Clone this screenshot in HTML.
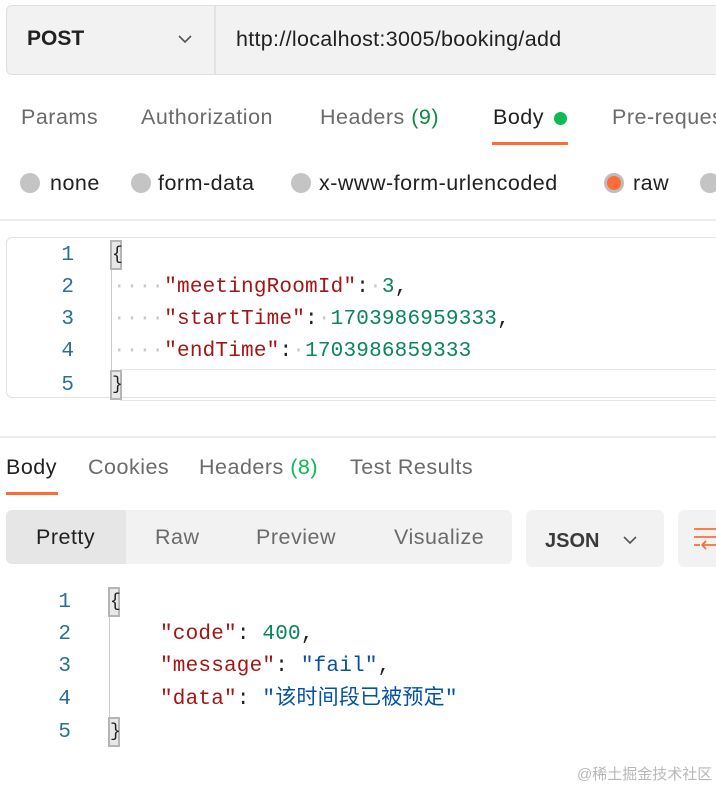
<!DOCTYPE html>
<html><head><meta charset="utf-8"><style>
*{margin:0;padding:0;box-sizing:border-box}
html{overflow:hidden;width:716px;height:788px}
body{width:716px;height:788px;background:#fff;position:relative;overflow:hidden;font-family:"Liberation Sans","Noto Sans CJK SC",sans-serif;color:#212121}
.a{position:absolute;white-space:nowrap}
.ui{font-size:21.5px;letter-spacing:0.5px;color:#6b6b6b}
.mono{font-family:"Liberation Mono","Noto Sans CJK SC",monospace;font-size:21px;letter-spacing:0.2px;line-height:26px;height:26px}
.ln{color:#2a6f97;font-family:"Liberation Mono",monospace;font-size:21px;width:30px;text-align:right}
.k{color:#a31515}.n{color:#098658}.s{color:#0451a5}.d{color:#ccc}
.rad{position:absolute;width:20px;height:20px;border-radius:50%;background:#c4c4c4}
.br{position:absolute;width:12px;height:30px;background:#e8e8e8;border:2px solid #b5b5b5;font-family:"Liberation Mono",monospace;font-size:18px;line-height:26px;text-align:center;color:#222}
</style></head><body>
<div class="a" style="left:6px;top:5px;width:710px;height:70px;background:#f2f2f2;border:1.5px solid #e0e0e0;border-right:none;border-radius:6px 0 0 6px"></div>
<div class="a" style="left:214px;top:6px;width:2px;height:68px;background:#e2e2e2"></div>
<div class="a" style="left:27px;top:27px;font-size:21px;font-weight:bold;color:#212121">POST</div>
<svg class="a" style="left:177px;top:34px" width="16" height="10"><path d="M2 2 L8 8 L14 2" fill="none" stroke="#555" stroke-width="1.6"/></svg>
<div class="a" style="left:236px;top:27px;font-size:21.5px;letter-spacing:0.3px;color:#212121">http://localhost:3005/booking/add</div>
<div class="a ui" style="left:21px;top:105px">Params</div>
<div class="a ui" style="left:141px;top:105px">Authorization</div>
<div class="a ui" style="left:320px;top:105px">Headers <span style="color:#0f8a3e">(9)</span></div>
<div class="a ui" style="left:493px;top:105px;color:#212121">Body</div>
<div class="a" style="left:554px;top:112px;width:13px;height:13px;border-radius:50%;background:#0cbb52"></div>
<div class="a" style="left:492px;top:142px;width:76px;height:3px;background:#ff6c37"></div>
<div class="a ui" style="left:612px;top:105px">Pre-request Script</div>
<div class="rad" style="left:20px;top:173px"></div><div class="a ui" style="left:50px;top:171px;color:#212121">none</div>
<div class="rad" style="left:131px;top:173px"></div><div class="a ui" style="left:158px;top:171px;color:#212121">form-data</div>
<div class="rad" style="left:291px;top:173px"></div><div class="a ui" style="left:319px;top:171px;color:#212121">x-www-form-urlencoded</div>
<div class="rad" style="left:604px;top:173px;background:#ff6c37;border:3px solid #bdbdbd"></div><div class="a ui" style="left:633px;top:171px;color:#212121">raw</div>
<div class="rad" style="left:700px;top:173px"></div>
<div class="a" style="left:0;top:219px;width:716px;height:2px;background:#ededed"></div>
<div class="a" style="left:6px;top:237px;width:710px;height:161px;border:1.5px solid #e3e3e3;border-right:none;border-radius:6px 0 0 6px"></div>
<div class="a" style="left:120px;top:369px;width:596px;height:32px;border-top:1.5px solid #e8e8e8;border-bottom:1.5px solid #e8e8e8"></div>
<div class="a ln" style="left:44px;top:244px">1</div>
<div class="a ln" style="left:44px;top:276px">2</div>
<div class="a ln" style="left:44px;top:308px">3</div>
<div class="a ln" style="left:44px;top:340px">4</div>
<div class="a ln" style="left:44px;top:374px">5</div>
<div class="br" style="left:110px;top:240px">{</div>
<div class="a" style="left:111px;top:270px;width:1px;height:100px;background:#ccc"></div>
<div class="a mono" style="left:113px;top:275px"><span class="d">····</span><span class="k">"meetingRoomId"</span>:<span class="d">·</span><span class="n">3</span>,</div>
<div class="a mono" style="left:113px;top:307px"><span class="d">····</span><span class="k">"startTime"</span>:<span class="d">·</span><span class="n">1703986959333</span>,</div>
<div class="a mono" style="left:113px;top:339px"><span class="d">····</span><span class="k">"endTime"</span>:<span class="d">·</span><span class="n">1703986859333</span></div>
<div class="br" style="left:110px;top:370px">}</div>
<div class="a" style="left:0;top:436px;width:716px;height:2px;background:#ededed"></div>
<div class="a ui" style="left:6px;top:455px;color:#212121">Body</div>
<div class="a" style="left:6px;top:492px;width:52px;height:3px;background:#ff6c37"></div>
<div class="a ui" style="left:88px;top:455px">Cookies</div>
<div class="a ui" style="left:199px;top:455px">Headers <span style="color:#0cbb52">(8)</span></div>
<div class="a ui" style="left:350px;top:455px">Test Results</div>
<div class="a" style="left:6px;top:510px;width:506px;height:54px;background:#f2f2f2;border-radius:6px"></div>
<div class="a" style="left:6px;top:510px;width:120px;height:54px;background:#e6e6e6;border-radius:6px 0 0 6px"></div>
<div class="a ui" style="left:36px;top:525px;color:#212121">Pretty</div>
<div class="a ui" style="left:155px;top:525px">Raw</div>
<div class="a ui" style="left:256px;top:525px">Preview</div>
<div class="a ui" style="left:394px;top:525px">Visualize</div>
<div class="a" style="left:526px;top:510px;width:138px;height:57px;background:#f2f2f2;border-radius:6px"></div>
<div class="a" style="left:545px;top:530px;font-size:20px;font-weight:bold;color:#3a3a3a">JSON</div>
<svg class="a" style="left:622px;top:535px" width="16" height="10"><path d="M2 2 L8 8 L14 2" fill="none" stroke="#555" stroke-width="1.6"/></svg>
<div class="a" style="left:678px;top:510px;width:38px;height:57px;background:#f2f2f2;border-radius:6px 0 0 6px"></div>
<svg class="a" style="left:692px;top:526px" width="24" height="26"><path d="M2 3H24M2 11H24M2 19H8M10 19L14 15M10 19L14 23M10 19H24" fill="none" stroke="#ff6c37" stroke-width="1.8"/></svg>
<div class="a ln" style="left:41px;top:591px">1</div>
<div class="a ln" style="left:41px;top:623px">2</div>
<div class="a ln" style="left:41px;top:655px">3</div>
<div class="a ln" style="left:41px;top:688px">4</div>
<div class="a ln" style="left:41px;top:721px">5</div>
<div class="br" style="left:108px;top:587px">{</div>
<div class="a" style="left:109px;top:617px;width:1px;height:100px;background:#ccc"></div>
<div class="a mono" style="left:160px;top:622px"><span class="k">"code"</span>: <span class="n">400</span>,</div>
<div class="a mono" style="left:160px;top:654px"><span class="k">"message"</span>: <span class="s">"fail"</span>,</div>
<div class="a mono" style="left:160px;top:687px"><span class="k">"data"</span>: <span class="s">"该时间段已被预定"</span></div>
<div class="br" style="left:108px;top:717px">}</div>
<div class="a" style="left:577px;top:763px;font-size:15px;color:#b8b8b8">@稀土掘金技术社区</div>
</body></html>
